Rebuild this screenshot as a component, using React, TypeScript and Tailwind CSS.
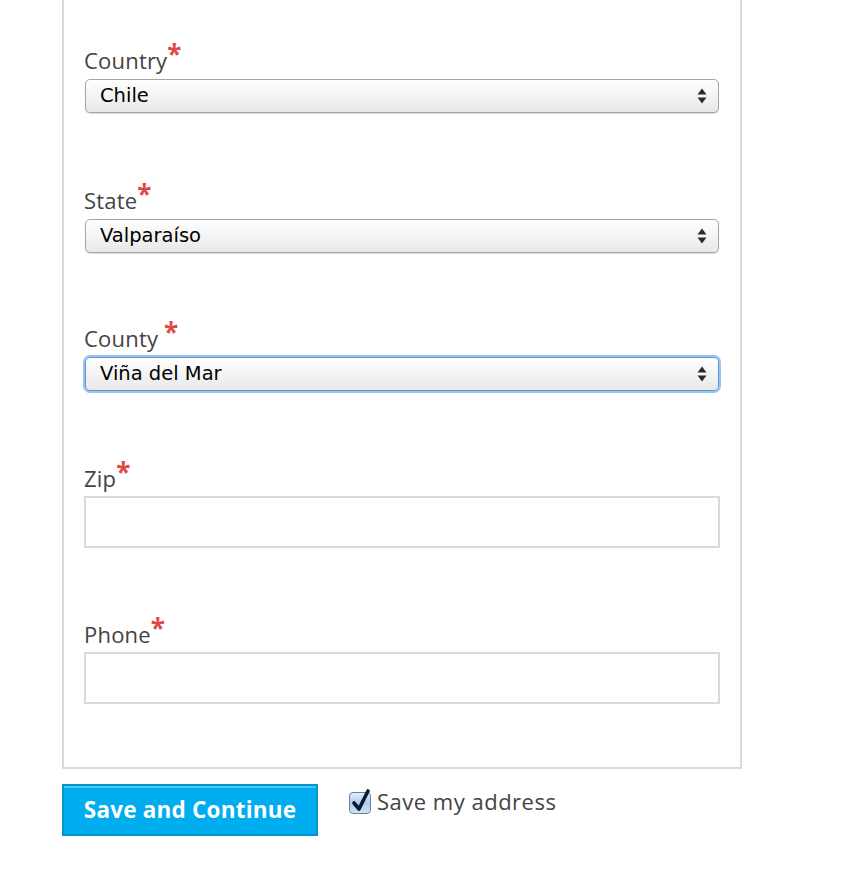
import React from "react"

const labelFont = { fontFamily: '"Open Sans", "DejaVu Sans", sans-serif' }
const selectFont = { fontFamily: '"DejaVu Sans", "Liberation Sans", sans-serif' }

function Star() {
  return <span className="text-[#e04848] font-bold text-[26px] leading-none relative -top-[5px]">*</span>
}

function Label({ text, spaced }: { text: string; spaced?: boolean }) {
  return (
    <div className="h-[30px] leading-[30px] text-[22px] text-[#444] tracking-[0.2px]" style={labelFont}>
      {text}
      {spaced ? " " : ""}
      <Star />
    </div>
  )
}

function Arrows() {
  return (
    <svg width="10" height="18" viewBox="0 0 10 18" className="absolute right-[12px] top-[8px] pointer-events-none">
      <path d="M0.5 7.5 L5 1.5 L9.5 7.5 Z" fill="#2a2a2a" />
      <path d="M0.5 10.5 L5 16.5 L9.5 10.5 Z" fill="#2a2a2a" />
    </svg>
  )
}

function SelectField({ label, value, spaced, focused, mt }: { label: string; value: string; spaced?: boolean; focused?: boolean; mt: string }) {
  return (
    <div className={mt}>
      <Label text={label} spaced={spaced} />
      <div className="relative mt-[4px] ml-[1px] w-[634px]">
        <select
          defaultValue={value}
          className={
            "appearance-none w-full h-[34px] rounded-[5px] pl-[14px] text-[19.5px] text-black bg-gradient-to-b from-white via-[#f4f4f4] to-[#e8e8e8] outline-none " +
            (focused
              ? "border border-[#5b95d8] shadow-[0_0_0_2px_#9cc2ee]"
              : "border border-[#a6a6a6] shadow-[0_1px_1px_rgba(0,0,0,0.15)]")
          }
          style={selectFont}
        >
          <option>{value}</option>
        </select>
        <Arrows />
      </div>
    </div>
  )
}

function TextField({ label, mt }: { label: string; mt: string }) {
  return (
    <div className={mt}>
      <Label text={label} />
      <input className="mt-[3px] block w-[636px] h-[52px] border-2 border-[#dadada] bg-white outline-none" />
    </div>
  )
}

function Checkbox() {
  return (
    <div className="relative w-[24px] h-[24px]">
      <div className="absolute left-0 top-[4px] w-[22px] h-[22px] rounded-[4px] border border-[#6e7f94] bg-gradient-to-b from-[#dfeefc] via-[#a9cdf2] to-[#cfe4fa]" />
      <svg width="26" height="28" viewBox="0 0 26 28" className="absolute left-0 top-0">
        <path d="M5 15 L10 21 L19 3" fill="none" stroke="#0c1a2c" strokeWidth="3.6" strokeLinecap="round" strokeLinejoin="round" />
      </svg>
    </div>
  )
}

export default function App() {
  return (
    <div className="w-[842px] h-[894px] bg-white relative">
      <div className="ml-[62px] w-[680px] border-x-2 border-b-2 border-[#dadada] pl-[20px] pt-[45px] pb-[63px]">
        <SelectField label="Country" value="Chile" mt="mt-0" />
        <SelectField label="State" value="Valparaíso" mt="mt-[72px]" />
        <SelectField label="County" value="Viña del Mar" spaced focused mt="mt-[70px]" />
        <TextField label="Zip" mt="mt-[72px]" />
        <TextField label="Phone" mt="mt-[71px]" />
      </div>
      <div className="flex items-start ml-[62px] mt-[15px]">
        <button
          className="w-[256px] h-[52px] bg-[#00adef] border-2 border-[#0095cf] shadow-[inset_0_2px_0_#4cc6f4] text-white font-bold text-[22.5px] tracking-[0.2px]"
          style={labelFont}
        >
          Save and Continue
        </button>
        <label className="flex items-start ml-[31px] mt-[4px] gap-[4px]">
          <Checkbox />
          <span className="text-[22px] leading-[30px] text-[#444] -mt-[2px] tracking-[0.5px]" style={labelFont}>Save my address</span>
        </label>
      </div>
    </div>
  )
}
